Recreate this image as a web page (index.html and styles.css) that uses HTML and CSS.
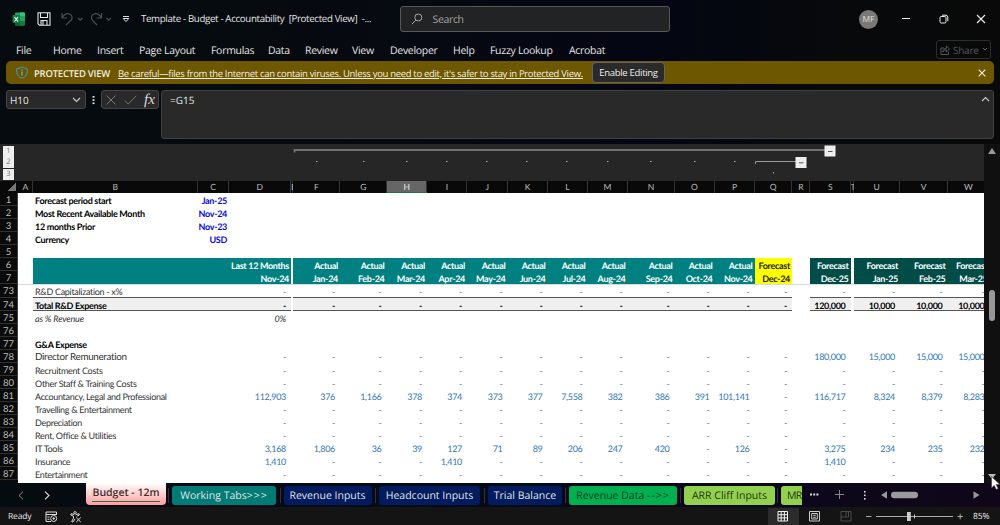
FILE: index.html
```html
<!DOCTYPE html>
<html lang="en">
<head>
<meta charset="utf-8">
<title>Template - Budget - Accountability</title>
<link rel="stylesheet" href="styles.css">
</head>
<body>
<div class="app">
  <header class="titlebar">
    <svg class="logo" width="14" height="14" viewBox="0 0 14 14"><rect x="3" y="0.5" width="10" height="13" rx="1" fill="#21a366"/><path d="M8 .5h4a1 1 0 0 1 1 1V4H8z" fill="#33c481"/><path d="M3 7h5v6.500H4a1 1 0 0 1-1-1z" fill="#185c37"/><path d="M8 9h5v3.500a1 1 0 0 1-1 1H8z" fill="#107c41"/><rect x="0.500" y="3" width="7.500" height="8" rx=".8" fill="#107c41"/><path d="M2.500 5l3.500 4.500M6 5L2.500 9.500" stroke="#fff" stroke-width="1.200"/></svg>
    <svg class="save" width="14" height="14" viewBox="0 0 14 14" fill="none" stroke="#e6e6e6" stroke-width="1.100"><path d="M1 .8h12v12.400H2.500L1 11.700zM3.500 1v4.500h7V1M4 13V8.500h6V13M6 9v4"/></svg>
    <svg class="undo" width="24" height="16" viewBox="0 0 24 16" fill="none" stroke="#4a4e51" stroke-width="1.200"><path d="M2 2v5h5M2.300 6.500C4.500 3 7 2 9.500 3s3.500 4 1.500 6.300L6 14M18 7l2.200 2.200L22.400 7"/></svg>
    <svg class="redo" width="24" height="16" viewBox="0 0 24 16" fill="none" stroke="#4a4e51" stroke-width="1.200"><path d="M11.500 2v5h-5M11.200 6.500C9 3 6.500 2 4 3S.5 7 2.500 9.300L7 14M16.500 7l2.200 2.200L20.900 7"/></svg>
    <svg class="more" width="8" height="8" viewBox="0 0 8 8"><path d="M1 1.500h6" stroke="#ddd"/><path d="M1.200 3.500h5.600L4 6.600z" fill="none" stroke="#ddd"/></svg>
    <span class="doc-title">Template - Budget - Accountability&nbsp; [Protected View]&nbsp; -...</span>
    <div class="search"><svg width="12" height="12" viewBox="0 0 12 12" fill="none" stroke="#aaa" stroke-width="1"><circle cx="7.300" cy="4.500" r="3.500"/><path d="M4.800 7.200L.8 11.200"/></svg><span>Search</span></div>
    <span class="avatar">MF</span>
    <svg class="win-min" width="10" height="10" viewBox="0 0 10 10"><path d="M1 4.500h8" stroke="#eee"/></svg>
    <svg class="win-max" width="10" height="10" viewBox="0 0 10 10" fill="none" stroke="#eee"><rect x="1" y="2.500" width="6" height="6.500" rx="1.200"/><path d="M3 1.200h4A2 2 0 0 1 8.800 3v4.200"/></svg>
    <svg class="win-close" width="10" height="10" viewBox="0 0 10 10"><path d="M1 1l8 8M9 1L1 9" stroke="#eee" stroke-width="1.100"/></svg>
  </header>

  <nav class="menu">
    <span>File</span><span>Home</span><span>Insert</span><span>Page Layout</span><span>Formulas</span><span>Data</span><span>Review</span><span>View</span><span>Developer</span><span>Help</span><span>Fuzzy Lookup</span><span>Acrobat</span>
    <div class="share"><svg width="10" height="10" viewBox="0 0 10 10" fill="none" stroke="#55585a"><path d="M4 3H1v6.500h7.500V7M2.800 7C3 4.500 4.500 3.500 6.300 3.500V1L9.500 4 6.300 7V5C4.500 5 3.500 5.500 2.800 7z"/></svg><span>Share</span><svg width="6" height="5" viewBox="0 0 6 5" fill="none" stroke="#666"><path d="M1 1l2 2 2-2"/></svg></div>
  </nav>

  <div class="banner">
    <svg width="12" height="13" viewBox="0 0 12 13" fill="none"><path d="M6 .8C7.500 2 9.300 2.500 11.200 2.500V6c0 3-2 5-5.200 6.300C2.800 11 .8 9 .8 6V2.500C2.700 2.500 4.500 2 6 .8z" stroke="#4a94b8"/><path d="M6 3.200v1.300M6 5.500v4" stroke="#4fb0e0" stroke-width="1.300"/></svg>
    <b>PROTECTED VIEW</b>
    <div class="notice"><u>Be careful—files from the Internet can contain viruses. Unless you need to edit, it's safer to stay in Protected View.</u></div>
    <button class="enable">Enable Editing</button>
    <svg class="banner-close" width="8" height="8" viewBox="0 0 8 8"><path d="M.7.7l6.600 6.600M7.300.7L.7 7.300" stroke="#f4f0dc" stroke-width="1.100"/></svg>
  </div>

  <div class="formula-row">
    <div class="namebox"><span>H10</span><svg width="9" height="6" viewBox="0 0 9 6"><path d="M1 1l3.500 3.500L8 1" fill="none" stroke="#ccc" stroke-width="1.100"/></svg></div>
    <svg class="dots" width="3" height="10" viewBox="0 0 3 10" fill="#ddd"><rect x=".5" y="1" width="2" height="1.700"/><rect x=".5" y="4.200" width="2" height="1.700"/><rect x=".5" y="7.400" width="2" height="1.700"/></svg>
    <div class="fx"><svg width="10" height="10" viewBox="0 0 10 10"><path d="M.5.5l9 9M9.500.5l-9 9" stroke="#777"/></svg><svg width="13" height="10" viewBox="0 0 13 10"><path d="M.7 5.500L4.300 9 12.300.8" fill="none" stroke="#777"/></svg><i>fx</i></div>
    <div class="formula"><span>=G15</span><svg width="9" height="6" viewBox="0 0 9 6"><path d="M1 5l3.500-3.500L8 5" fill="none" stroke="#ccc" stroke-width="1.100"/></svg></div>
  </div>

  <main class="work">
    <div class="sheet">
      <div class="outline">
        <div class="levels"><span>1</span><span>2</span><span>3</span></div>
        <svg class="brackets" width="966" height="37" viewBox="18 144 966 37">
          <path d="M294.500 152.500v-2.500H825" fill="none" stroke="#707070" stroke-width="1.800"/>
          <path d="M755.500 164v-2.500H796" fill="none" stroke="#9a9a9a"/>
          <g fill="#aaa"><rect x="316" y="161" width="1.500" height="1"/><rect x="363" y="161" width="1.500" height="1"/><rect x="406" y="161" width="1.500" height="1"/><rect x="446" y="161" width="1.500" height="1"/><rect x="486" y="161" width="1.500" height="1"/><rect x="526" y="161" width="1.500" height="1"/><rect x="566" y="161" width="1.500" height="1"/><rect x="607" y="161" width="1.500" height="1"/><rect x="650" y="161" width="1.500" height="1"/><rect x="694" y="161" width="1.500" height="1"/><rect x="734" y="161" width="1.500" height="1"/><rect x="773" y="172" width="1" height="1.500"/></g>
          <rect x="824.500" y="145.500" width="11" height="11" fill="#eee"/><path d="M828 151.500h4.500" stroke="#555"/>
          <rect x="795.500" y="157" width="11" height="11" fill="#eee"/><path d="M799 162.800h4.500" stroke="#555"/>
        </svg>
      </div>
      <div id="grid"></div>
    </div>
    <div class="vscroll">
      <svg width="8" height="6" viewBox="0 0 8 6"><path d="M4 0l4 6H0z" fill="#999"/></svg>
      <span class="vthumb"></span>
      <svg class="down" width="8" height="6" viewBox="0 0 8 6"><path d="M0 0h8L4 5z" fill="#bbb"/></svg>
    </div>
  </main>

  <div class="tabs">
    <svg class="prev" width="6" height="9" viewBox="0 0 6 9"><path d="M5 .7L1 4.500l4 3.800" fill="none" stroke="#8b8d8f"/></svg>
    <svg class="next" width="6" height="9" viewBox="0 0 6 9"><path d="M1 .7l4 3.800-4 3.800" fill="none" stroke="#ddd" stroke-width="1.100"/></svg>
    <div class="tab active"><span>Budget - 12m</span></div>
    <div class="tab teal t2">Working Tabs<span class="arrows">&gt;&gt;&gt;</span></div>
    <div class="tab navy t3">Revenue Inputs</div>
    <div class="tab navy t4">Headcount Inputs</div>
    <div class="tab navy t5">Trial Balance</div>
    <div class="tab green t6">Revenue Data <span class="arrows">--&gt;&gt;</span></div>
    <div class="tab lime t7">ARR Cliff Inputs</div>
    <div class="tab lime t8">MR</div>
    <svg class="tabtools" width="197" height="25" viewBox="803 483 197 25">
      <g fill="#ddd"><rect x="811" y="493.500" width="2" height="2"/><rect x="814.200" y="493.500" width="2" height="2"/><rect x="817.400" y="493.500" width="2" height="2"/><rect x="865" y="491" width="1.600" height="1.600"/><rect x="865" y="494.500" width="1.600" height="1.600"/><rect x="865" y="498" width="1.600" height="1.600"/></g>
      <path d="M836 494.500h9M840.500 490v9" stroke="#888"/>
      <path d="M888 491.300v7.400l-6-3.700zM974.500 491.300v7.400l6-3.700z" fill="#999"/>
      <rect x="892" y="491.700" width="27" height="6.600" rx="3.300" fill="#9b9b9b"/>
    </svg>
  </div>

  <footer class="status">
    <span>Ready</span>
    <svg class="st1" width="13" height="12" viewBox="0 0 13 12" fill="none" stroke="#ddd"><path d="M6 10.500H1V1h10.500v3M1 3.500h10.500M2.500 6h2M2.500 8.300h2"/><circle cx="8.700" cy="7.500" r="3"/><circle cx="8.700" cy="7.500" r=".8" fill="#ddd"/></svg>
    <svg class="st2" width="12" height="12" viewBox="0 0 12 12" fill="none" stroke="#ddd"><circle cx="5" cy="1.800" r="1.200"/><path d="M4 3.700L1.200 2.700.8 4l2.700 1.200v2L1.700 10.500l1.200.6L5 8M6 3.700l3-1 .4 1.300-2.600 1.200M6.200 6.500l4.600 4.600M10.800 6.500l-4.600 4.600"/></svg>
    <svg class="views" width="232" height="17" viewBox="768 508 232 17" fill="none">
      <rect x="768" y="508" width="31" height="17" fill="#2b2b2b"/>
      <path d="M778 511.500h9.500v9.500H778zM778 514.700h9.500M778 517.900h9.500M781.200 511.500v9.500M784.400 511.500v9.500" stroke="#f0f0f0"/>
      <path d="M809.500 511.500h10v9.500h-10zM811.700 513.500h5.600v5.500h-5.600zM813.200 515.300h2.600M813.200 517.300h2.600" stroke="#ccc"/>
      <path d="M841 511.500h10v9.500h-10zM841 517h5v-5.500M846 517v0h2.500v-5.500" stroke="#4a4a4a"/>
      <path d="M866 516.500h5.500M957.500 516.500h5.500M960.200 513.800v5.500M876 516.500h77" stroke="#aaa"/>
      <path d="M914.500 514.500v4" stroke="#ccc"/><rect x="907" y="512" width="3.800" height="9" fill="#ccc"/>
    </svg>
    <span class="zoom">85%</span>
  </footer>
  <svg class="cursor" width="9" height="14" viewBox="0 0 9 14"><path d="M.5.5v11.500l2.700-2.600 2 4.100 2-.9-2-4H9z" fill="#fff" stroke="#222" stroke-width=".5"/></svg>
</div>
<script src="grid.js"></script>
</body>
</html>
```
FILE: grid.js
```js
const COLS = "ABCDEFGHIJKLMNOPQRSTUVW".split("");
const MONTHS = ["Jan-24", "Feb-24", "Mar-24", "Apr-24", "May-24", "Jun-24", "Jul-24", "Aug-24", "Sep-24", "Oct-24", "Nov-24"];
const VALUE_COLS = "DFGHIJKLMNOPQSUVW".split("");

// Spread a list over the columns that carry values.
const spread = list => Object.fromEntries(VALUE_COLS.map((c, i) => [c, list[i]]));
const dashes = () => spread(VALUE_COLS.map(() => "-"));

const rows = [
  { n: 1, kind: "info", cells: { B: "Forecast period start", C: "Jan-25" } },
  { n: 2, kind: "info", cells: { B: "Most Recent Available Month", C: "Nov-24" } },
  { n: 3, kind: "info", cells: { B: "12 months Prior", C: "Nov-23" } },
  { n: 4, kind: "info", cells: { B: "Currency", C: "USD" } },
  { n: 5, kind: "blank", cells: {} },
  { n: 6, kind: "head", cells: spread(["Last 12 Months", ...MONTHS.map(() => "Actual"), "Forecast", "Forecast", "Forecast", "Forecast", "Forecast"]) },
  { n: 7, kind: "head last", cells: spread(["Nov-24", ...MONTHS, "Dec-24", "Dec-25", "Jan-25", "Feb-25", "Mar-25"]) },
  { n: 73, kind: "line first", cells: { B: "R&D Capitalization - x%", ...dashes() } },
  { n: 74, kind: "total", cells: { B: "Total R&D Expense", ...dashes(), S: "120,000", U: "10,000", V: "10,000", W: "10,000" } },
  { n: 75, kind: "ratio", cells: { B: "as % Revenue", D: "0%" } },
  { n: 76, kind: "blank", cells: {} },
  { n: 77, kind: "section", cells: { B: "G&A Expense" } },
  { n: 78, kind: "line large", cells: { B: "Director Remuneration", ...dashes(), S: "180,000", U: "15,000", V: "15,000", W: "15,000" } },
  { n: 79, kind: "line", cells: { B: "Recruitment Costs", ...dashes() } },
  { n: 80, kind: "line", cells: { B: "Other Staff & Training Costs", ...dashes() } },
  { n: 81, kind: "line", cells: { B: "Accountancy, Legal and Professional", ...spread(["112,903", "376", "1,166", "378", "374", "373", "377", "7,558", "382", "386", "391", "101,141", "-", "116,717", "8,324", "8,379", "8,283"]) } },
  { n: 82, kind: "line", cells: { B: "Travelling & Entertainment", ...dashes() } },
  { n: 83, kind: "line", cells: { B: "Depreciation", ...dashes() } },
  { n: 84, kind: "line", cells: { B: "Rent, Office & Utilities", ...dashes() } },
  { n: 85, kind: "line", cells: { B: "IT Tools", ...spread(["3,168", "1,806", "36", "39", "127", "71", "89", "206", "247", "420", "-", "126", "-", "3,275", "234", "235", "232"]) } },
  { n: 86, kind: "line", cells: { B: "Insurance", ...dashes(), D: "1,410", I: "1,410", S: "1,410" } },
  { n: 87, kind: "line", cells: { B: "Entertainment", ...dashes() } }
];

const make = (cls, text) => {
  const el = document.createElement("div");
  el.className = cls;
  if (text) {
    const span = document.createElement("span");
    span.textContent = text;
    el.append(span);
  }
  return el;
};

const grid = document.getElementById("grid");
const header = make("row colhead");
header.append(make("corner"));
COLS.forEach(c => header.append(make("c" + (c === "H" ? " selected" : "") + " k" + c, c)));
grid.append(header);

for (const r of rows) {
  const row = make("row " + r.kind);
  row.append(make("num", String(r.n)));
  COLS.forEach(c => row.append(make("c k" + c + (r.cells[c] === "-" ? " dash" : ""), r.cells[c])));
  grid.append(row);
}
```
FILE: styles.css
```css
* { box-sizing: border-box; }
body { margin: 0; background: #06090c; font-family: "Open Sans", "Noto Sans", sans-serif; color: #e4e4e4; text-rendering: geometricPrecision; }
svg { display: block; flex: none; }
span, b, u { white-space: nowrap; }
.app { position: relative; width: 1000px; height: 525px; overflow: hidden; display: flex; flex-direction: column; background: linear-gradient(90deg, #050b0e 0, #060a10 35%, #040613 65%, #07090b 85%, #090909 100%); }

.titlebar { height: 38px; flex: none; display: flex; align-items: center; padding-left: 12px; }
.save { margin-left: 11px; }
.undo { margin-left: 9px; }
.redo { margin-left: 6px; }
.more { margin-left: 8px; }
.doc-title { width: 248px; flex: none; margin-left: 11px; font-size: 9.7px; letter-spacing: -.33px; }
.doc-title, .search span { line-height: 16px; }
.search { width: 270px; height: 26px; flex: none; margin-left: 11px; padding-left: 10px; display: flex; align-items: center; gap: 9.5px; background: #222324; border: 1px solid #55585b; border-radius: 3px; color: #a5a5a5; font-size: 10.5px; letter-spacing: -.35px; }
.search span { padding-top: 1px; }
.avatar { width: 19px; height: 19px; margin-left: 189px; border-radius: 50%; background: #7b7977; color: #dedede; font-size: 8.5px; line-height: 19px; text-align: center; }
.win-min { margin-left: 23px; }
.win-max { margin-left: 28px; }
.win-close { margin-left: 27px; }

.menu { height: 23px; flex: none; display: grid; align-items: center; padding-left: 16px; font-size: 10.5px; letter-spacing: -.3px; grid-template-columns: 37px 44px 42px 72px 57px 37px 47px 38px 63px 37px 79px 367px 55px; }
.menu > span { padding-top: 2px; }
.share { width: 55px; height: 19px; padding-left: 3px; display: flex; align-items: center; gap: 3px; border: 1px solid #2b2d2e; border-radius: 3px; color: #55585a; font-size: 10px; letter-spacing: -.25px; }

.banner { height: 23px; flex: none; margin: 0 6px; padding-left: 10px; display: flex; align-items: center; background: #6d5700; border-radius: 5px; font-size: 9.5px; color: #f1eee2; }
.banner b { width: 84px; flex: none; margin-left: 6px; font-weight: 600; letter-spacing: -.23px; padding-top: 1px; }
.notice { width: 474px; flex: none; letter-spacing: -.325px; padding-top: 1px; }
.notice u { text-underline-offset: 1px; }
.enable { width: 73px; height: 21px; flex: none; padding: 0; border: 1px solid #68645a; border-radius: 4px; background: #2a2a2a; color: #eee; font: 9.5px "Open Sans", sans-serif; letter-spacing: -.3px; white-space: nowrap; }
.banner-close { margin-left: 313px; }

.formula-row { height: 60px; flex: none; display: flex; align-items: flex-start; padding-top: 6px; padding-left: 6px; font-size: 10px; }
.namebox { width: 80px; height: 19px; flex: none; padding: 0 4px 0 3px; display: flex; align-items: center; justify-content: space-between; background: #292929; border: 1px solid #454545; border-radius: 3px; }
.dots { margin: 5px 6px 0 6px; }
.fx { width: 58px; height: 19px; flex: none; padding-left: 4px; display: flex; align-items: center; gap: 8px; background: #292929; border: 1px solid #454545; border-radius: 3px; }
.fx i { font: italic 15px/16px "Liberation Serif", serif; margin-left: -1px; color: #ddd; }
.formula { width: 833px; height: 49px; flex: none; margin-left: 2px; padding: 2px 3px 0 8px; display: flex; justify-content: space-between; background: #292929; border: 1px solid #3e4044; border-radius: 3px; }
.formula svg { margin-top: 3px; }

.work { height: 339px; flex: none; display: flex; }
.sheet { width: 984px; height: 339px; overflow: hidden; background: linear-gradient(90deg, #0a0a0a 18px, #fff 18px); }
.outline { height: 37px; display: flex; background: #262626; }
.levels { width: 18px; padding: 1.5px 0 0 3px; display: grid; grid-auto-rows: 11px; row-gap: .7px; align-content: start; }
.levels span { width: 11px; background: #eee; color: #777; font-size: 7.5px; line-height: 11px; text-align: center; }

.row { display: grid; width: 996px; height: 13px; font: 9px/16px Lato, sans-serif; letter-spacing: -.31px; color: #333; grid-template-rows: 100%; grid-template-columns: 18px 15px 164.500px 31px 62.500px 2px 47px 46.500px 40.500px 40px 40.500px 40px 40px 40px 47px 40px 40px 37.500px 18px 40.500px 3px 46.500px 47.500px 42px; }
.c { height: 100%; text-align: right; padding-right: 5px; white-space: nowrap; }
.kB { text-align: left; padding-left: 2px; }
.num { background: #0a0a0a; color: #bdbdbd; border-bottom: 1px solid #303030; border-right: 1px solid #444; text-align: center; font-size: 9.5px; font-weight: 400; font-style: normal; line-height: 15px; letter-spacing: 0; height: 100%; }
.colhead { height: 12px; background: #090909; color: #b9b9b9; line-height: 13px; letter-spacing: 0; }
.colhead .c { padding: 0; text-align: center; box-shadow: inset -1px 0 0 #333; overflow: hidden; font-size: 8.500px; }
.colhead .selected { background: #666; color: #e6e6e6; border-bottom: 1px solid #217346; }
.corner { background: linear-gradient(135deg, transparent 50%, #777 50%) 8px 2px / 8px 8px no-repeat; }
.info { color: #000; font-weight: 700; }
.info .kC { color: #0808e0; padding-right: 1.5px; }
.head { color: #fff; font-weight: 700; }
.head .c { padding-right: 2px; background: #008080; }
.head .kA, .head .kR, .head .kE, .head .kT { background: #fff; }
.head .kQ { background: #ff0; color: #222; }
.head .kS, .head .kU, .head .kV, .head .kW { background: #004d47; }
.last .c { border-bottom: 0; }
.first .c { box-shadow: inset 0 1px 0 #d5dddd; }
.line .c { color: #2e75b6; }
.line .kB { color: #333; }
.line .dash { color: #5c6f80; }
.first { height: 14px; }
.first .c:not(.kA):not(.kE):not(.kR):not(.kT) { border-bottom: 1px solid #555; }
.total { color: #000; font-weight: 700; line-height: 15px; }
.total .c:not(.kA):not(.kE):not(.kR):not(.kT) { background: #f0f0f0; border-bottom: 1px solid #555; }
.ratio { font-style: italic; line-height: 15px; letter-spacing: -.15px; }
.section { color: #000; font-weight: 700; line-height: 15px; }
.large { line-height: 14px; }
.large .kB { font-size: 9.800px; }

.vscroll { width: 16px; padding-top: 4px; display: flex; flex-direction: column; align-items: center; background: #101010; }
.vthumb { width: 6px; height: 31px; margin-top: 136px; border-radius: 3px; background: #989898; }
.down { margin-top: 153px; }

.tabs { height: 25px; flex: none; display: flex; align-items: flex-start; background: linear-gradient(90deg, #050c0f, #07091a 55%, #10061a); border-bottom: 1px solid #151515; overflow: hidden; }
.prev { margin: 8px 0 0 18px; }
.next { margin: 8px 0 0 20px; }
.tab { position: relative; height: 19px; margin: 3px 0 0 7.500px; border-radius: 3px; text-align: center; white-space: nowrap; font-size: 10.500px; line-height: 21px; flex: none; }
.tab:not(.active)::before { content: ""; position: absolute; left: -4px; top: 2px; width: 1px; height: 15px; background: #303238; }
.arrows { letter-spacing: 1px; }
.active { width: 80px; height: 22px; margin: 0 0 0 36px; border-radius: 0 0 4px 4px; background: linear-gradient(#fff, #ff9c9c); color: #3d3030; font-weight: 600; }
.active span { display: inline-block; height: 19px; border-bottom: 1px solid #2f7044; }
.teal { background: #007b76; }
.navy { background: #001b5e; }
.green { background: #00b050; color: #0d3a20; }
.lime { background: #92d050; color: #24330f; }
.t2 { width: 104px; margin-left: 6px; }
.t3 { width: 88px; }
.t4 { width: 101px; }
.t5 { width: 74px; margin-left: 8px; }
.t6 { width: 108px; margin-left: 7px; }
.t7 { width: 91px; margin-left: 7px; }
.t8 { width: 21px; margin-left: 6px; padding-left: 6px; text-align: left; border-radius: 3px 0 0 3px; letter-spacing: -.6px; }

.status { height: 17px; flex: none; display: flex; align-items: center; padding-left: 8px; background: #141414; font-size: 8.500px; letter-spacing: -.15px; position: relative; }
.status > span:first-child { width: 37px; }
.st2 { margin-left: 12px; }
.views { margin-left: 686px; }
.zoom { position: absolute; left: 973px; top: 3px; }
.cursor { position: absolute; left: 991px; top: 476px; }
```
